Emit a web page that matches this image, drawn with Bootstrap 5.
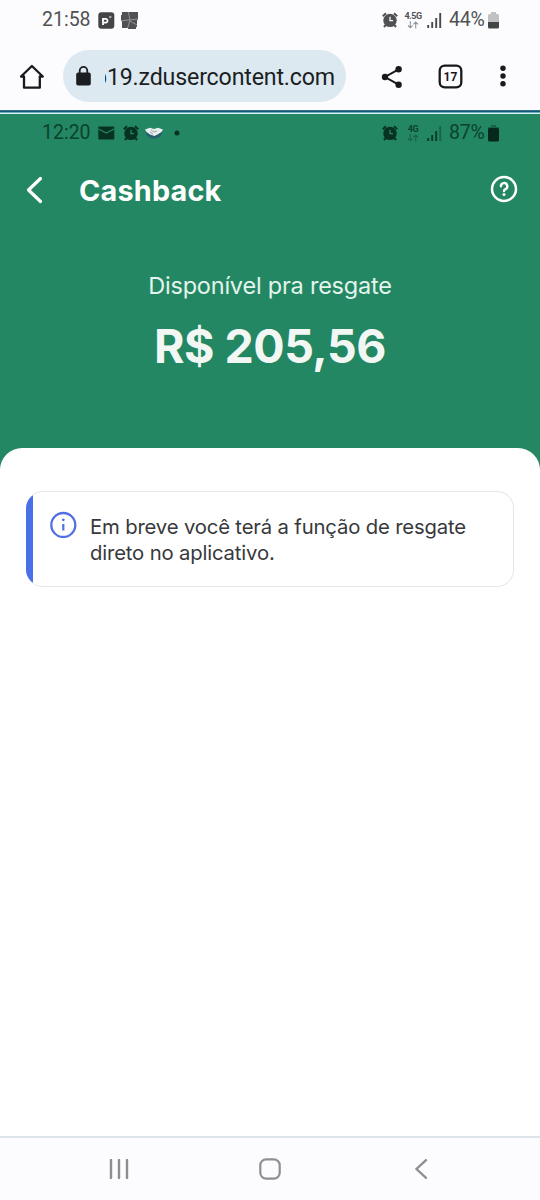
<!DOCTYPE html>
<html lang="pt-BR">
<head>
<meta charset="utf-8">
<meta name="viewport" content="width=device-width, initial-scale=1">
<title>Cashback</title>
<link href="https://cdn.jsdelivr.net/npm/bootstrap@5.3.0/dist/css/bootstrap.min.css" rel="stylesheet">
<style>
body{font-family:Inter,"Liberation Sans",sans-serif;background:#fff;line-height:1}
svg{display:block;flex:none}
.phone{width:540px;height:1200px}
.roboto{font-family:Roboto,"Liberation Sans",sans-serif}
.status{height:40px;padding-left:42px;padding-right:41px;color:#505153;font-size:19.5px}
.status span{white-space:nowrap;flex:none}
.clock{width:49px}
.pct{width:37px;letter-spacing:-.2px}
.status .net{font-size:9px;font-weight:700;letter-spacing:-.5px}
.chrome{background:#fcfcff;height:110px}
.toolbar{height:70px;padding:10px 34px 8px 18px}
.url{width:283px;height:52px;border-radius:26px;background:#dce9f1;margin-left:17px;padding-left:13px;color:#1b1f23;font-size:23.2px}
.clip{width:230px;margin-left:14px;height:32px;line-height:34px;letter-spacing:-.17px;overflow:hidden;white-space:nowrap;display:flex;justify-content:flex-end}
.progress-line{height:4px;background:linear-gradient(#32718b 0 1px,#12597a 1px 2px,#6eaabd 2px 3px,#d8f5ef 3px)}
.hero{background:#238763;height:356px}
.hero .status{height:38px;color:#0b422d}
.titlebar{height:76px;padding:0 22px 0 25px}
.titlebar h1{font-size:28.8px;font-weight:700;margin:2px 0 0 36px;letter-spacing:.2px}
.label{font-size:23.5px;color:#e3f5ec;line-height:28px;margin-top:44px;letter-spacing:-.22px}
.amount{font-size:46.5px;font-weight:700;color:#f3f7f4;line-height:56px;margin-top:18px;letter-spacing:-.5px}
.sheet{background:#fff;border-radius:22px 22px 0 0;margin-top:-22px;padding:43px 26px 0;position:relative}
.notice{height:96px;border:1.5px solid #e7e7e8;border-left:0;border-radius:17px;overflow:hidden;color:#37383b;font-size:20.3px;line-height:26px;letter-spacing:-.16px}
.stripe{width:7px;background:#4a70e8}
.sysnav{height:64px;background:#fcfcff;border-top:2px solid #dde5eb;padding:0 112px 0 109px}
</style>
</head>
<body>
<svg width="0" height="0" class="position-absolute">
<symbol id="alarm" viewBox="0 0 16 16"><circle cx="8" cy="8.4" r="6.700" fill="currentColor"/><path d="M.8 4.200 4 1.200M15.200 4.200 12 1.200M3.800 12.800 2 15M12.200 12.800 14 15" stroke="currentColor" stroke-width="2"/><path d="M8 4.700v4h3" fill="none" stroke="var(--cut)" stroke-width="1.300"/></symbol>
<symbol id="arrows" viewBox="0 0 12 8"><path d="M3.300 0v6.600M1 4.500l2.300 2.300 2.300-2.300M8.700 7.500V1M6.400 3.300 8.700 1 11 3.300" fill="none" stroke="currentColor" stroke-width="1.100"/></symbol>
</svg>
<main class="phone d-flex flex-column overflow-hidden">
<header class="chrome roboto">
<div class="status d-flex align-items-center" style="--cut:#fcfcff">
<span class="clock">21:58</span>
<svg width="17" height="17" viewBox="0 0 17 17" style="margin-left:7px"><rect x=".3" y=".3" width="16" height="16.400" rx="3.200" fill="#434446"/><path d="M5 13V6.800h3a2 2 0 0 1 0 3.900H6" fill="none" stroke="#fff" stroke-width="1.800"/><circle cx="12.300" cy="5" r="1.300" fill="#aaa"/></svg>
<svg width="17" height="17" viewBox="0 0 17 17" style="margin-left:6px"><path d="M1 0v3H0v6h1v7h6v1h8v-2h1V8h1V0z" fill="#505153"/><path d="M0 8.800 17 7M7.300 0 9 8l-2.300 8M9 9l7 4" stroke="#a4a5a7" stroke-width=".8" fill="none"/></svg>
<div class="ms-auto d-flex align-items-center">
<svg width="16" height="16"><use href="#alarm"/></svg>
<span class="net d-flex flex-column align-items-center" style="width:18px;margin-left:6px">4.5G<svg width="12" height="8" class="text-secondary opacity-75"><use href="#arrows"/></svg></span>
<svg width="15" height="15" viewBox="0 0 15 15" style="margin-left:5px"><path d="M1.200 12v3M5.200 9v6M9.200 5v10M13.200 0v15" stroke="#48494b" stroke-width="1.900"/></svg>
<span class="pct" style="margin-left:7px">44%</span>
<svg width="11" height="17" viewBox="0 0 11 17" style="margin-left:2px"><path d="M3 0h5v2h1.500Q11 2 11 3.500V11H0V3.500Q0 2 1.500 2H3z" fill="#c1c1c4"/><path d="M0 10h11v5q0 1.500-1.500 1.500h-8Q0 16.500 0 15z" fill="#434446"/></svg>
</div>
</div>
<div class="toolbar d-flex align-items-center">
<svg width="28" height="28" viewBox="0 0 28 28" fill="none" stroke="#17191c" stroke-width="2.300" stroke-linejoin="round"><path d="M3 14.500 13.900 4 24.800 14.500h-3v11.200H6V14.500z"/></svg>
<div class="url d-flex align-items-center">
<svg width="15" height="20" viewBox="0 0 15 20"><rect x=".2" y="6.500" width="14.600" height="13" rx="2" fill="#1b1d20"/><path d="M3.700 8V4.700a3.800 3.800 0 0 1 7.600 0V8" fill="none" stroke="#1b1d20" stroke-width="1.800"/></svg>
<div class="clip"><span>p19.zdusercontent.com</span></div>
</div>
<svg width="24" height="24" viewBox="0 0 24 24" style="margin-left:34px;margin-top:1px" fill="#17191c"><path d="M18.600 4.300 5 12l13.600 7.700" fill="none" stroke="#17191c" stroke-width="2"/><circle cx="18.600" cy="4.300" r="3.200"/><circle cx="5" cy="12" r="3.200"/><circle cx="18.600" cy="19.700" r="3.200"/></svg>
<svg width="25" height="25" viewBox="0 0 25 25" style="margin-left:34px"><rect x="1.700" y="1.700" width="21.600" height="21.600" rx="5" fill="none" stroke="#17191c" stroke-width="2.300"/><text x="12.500" y="16.900" font-size="12" font-weight="700" text-anchor="middle" fill="#17191c">17</text></svg>
<svg width="6" height="24" viewBox="0 0 6 24" style="margin-left:37px" fill="#17191c"><circle cx="3" cy="4.200" r="2.700"/><circle cx="3" cy="12" r="2.700"/><circle cx="3" cy="19.800" r="2.700"/></svg>
</div>
</header>
<div class="progress-line"></div>
<section class="hero">
<div class="status roboto d-flex align-items-center" style="--cut:#238763">
<span class="clock">12:20</span>
<svg width="17" height="14" viewBox="0 0 17 14" style="margin-left:7px"><rect x=".3" y=".5" width="16" height="13" rx="1" fill="#073222"/><path d="M.5 3 8.300 7 16 3" fill="none" stroke="#238763" stroke-width="1.400"/></svg>
<svg width="16" height="16" style="margin-left:8px;color:#073222"><use href="#alarm"/></svg>
<svg width="18" height="12" viewBox="0 0 18 12" style="margin-left:6px"><path d="M.5 4.500Q2 11.500 9 11.500t8.500-7z" fill="#235f6c"/><path d="M0 2.500 5 .8 9 2l4-1.200 5 1.700-1.500 2.500-4 2.500L9.500 9 5 7.500 1.500 5z" fill="#e7eeee"/><path d="m6 3 3 2 3-1M5 5l3 2" stroke="#829799" stroke-width=".8" fill="none"/></svg>
<svg width="6" height="6" viewBox="0 0 6 6" style="margin-left:11px"><circle cx="3" cy="3" r="2.500" fill="#073222"/></svg>
<div class="ms-auto d-flex align-items-center">
<svg width="16" height="16" style="color:#073222"><use href="#alarm"/></svg>
<span class="net d-flex flex-column align-items-center" style="width:18px;margin-left:6px">4G<svg width="12" height="8" class="opacity-50"><use href="#arrows"/></svg></span>
<svg width="15" height="15" viewBox="0 0 15 15" style="margin-left:5px"><path d="M1.200 12v3M5.200 9v6M9.200 5v10" stroke="#073b28" stroke-width="1.900"/><path d="M13.200 0v15" stroke="#176347" stroke-width="1.900"/></svg>
<span class="pct" style="margin-left:7px">87%</span>
<svg width="11" height="17" viewBox="0 0 11 17" style="margin-left:2px"><path d="M3 0h5v2h3v2H0V2h3z" fill="#176347"/><rect y="3" width="11" height="13.500" rx="1.500" fill="#07291d"/></svg>
</div>
</div>
<div class="titlebar d-flex align-items-center text-white">
<svg width="18" height="28" viewBox="0 0 18 28"><path d="M15.500 2.500 3.500 14l12 11.500" fill="none" stroke="#fff" stroke-width="3.200" stroke-linecap="round" stroke-linejoin="round"/></svg>
<h1>Cashback</h1>
<svg class="ms-auto" width="28" height="28" viewBox="0 0 28 28" fill="none" stroke="#fff" style="margin-bottom:2px"><circle cx="14" cy="14" r="12" stroke-width="2.500"/><path d="M10.900 11.200a3.200 3.200 0 1 1 4.700 2.900Q14 15 14 16" stroke-width="2.400" stroke-linecap="round"/><circle cx="14" cy="19.400" r="1.500" fill="#fff" stroke="none"/></svg>
</div>
<p class="label text-center mb-0">Disponível pra resgate</p>
<p class="amount text-center mb-0">R$ 205,56</p>
</section>
<section class="sheet flex-grow-1">
<div class="notice d-flex">
<div class="stripe"></div>
<svg width="28" height="28" viewBox="0 0 28 28" style="margin:18px 0 0 16px"><circle cx="14.300" cy="15" r="12" fill="none" stroke="#5270e5" stroke-width="2.300"/><path d="M14.300 14v6.500" stroke="#5270e5" stroke-width="2.200"/><circle cx="14.300" cy="9.800" r="1.400" fill="#5270e5"/></svg>
<p class="mb-0 text-nowrap" style="margin:22px 0 0 13px">Em breve você terá a função de resgate<br>direto no aplicativo.</p>
</div>
</section>
<nav class="sysnav d-flex justify-content-between align-items-center">
<svg width="20" height="20" viewBox="0 0 20 20"><path d="M2 1v18M10 1v18M18 1v18" stroke="#8d8e91" stroke-width="2.400" stroke-linecap="round"/></svg>
<svg width="22" height="22" viewBox="0 0 22 22" style="margin-right:4px"><rect x="1.300" y="1.300" width="19.400" height="19.400" rx="6" fill="none" stroke="#8d8e91" stroke-width="2.200"/></svg>
<svg width="14" height="20" viewBox="0 0 14 20"><path d="M12 1.200 2.500 10l9.500 8.800" fill="none" stroke="#8d8e91" stroke-width="2.300" stroke-linecap="round"/></svg>
</nav>
</main>
<script src="https://cdn.jsdelivr.net/npm/bootstrap@5.3.0/dist/js/bootstrap.bundle.min.js"></script>
</body>
</html>
